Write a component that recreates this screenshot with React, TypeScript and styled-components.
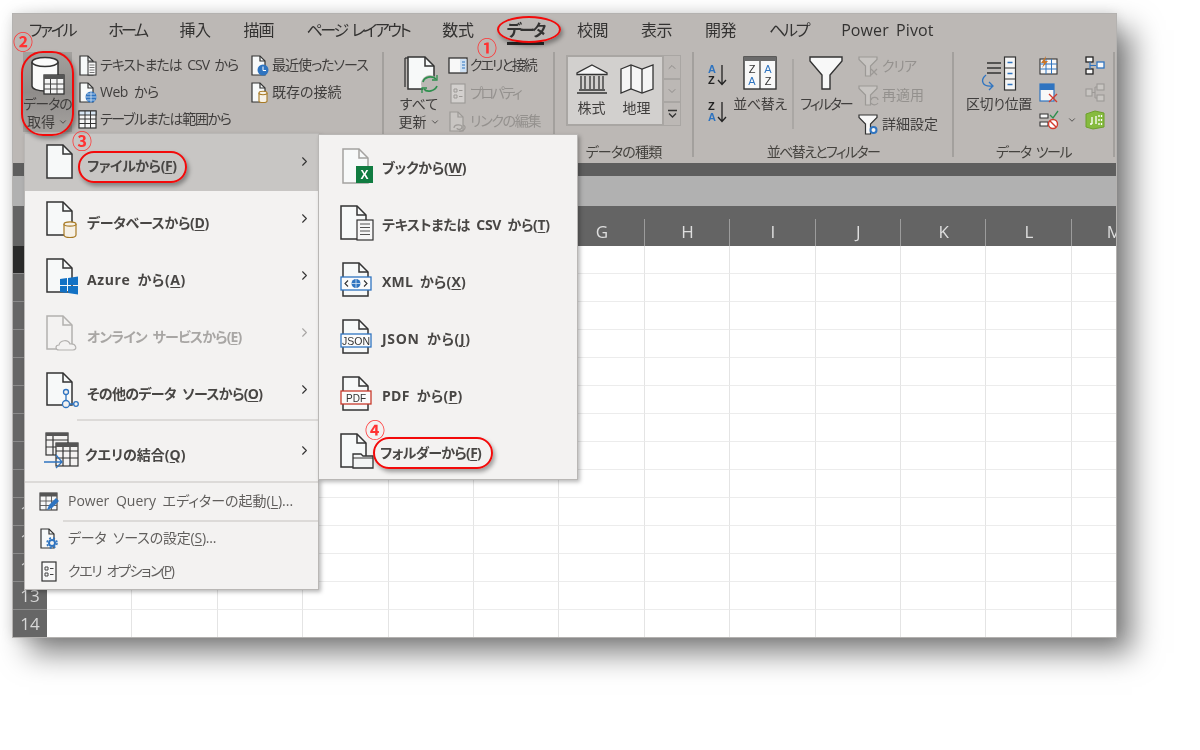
import React from "react";
import styled, { createGlobalStyle } from "styled-components";
import { ChevronDown, ChevronRight, ChevronUp } from "lucide-react";

const GlobalStyle = createGlobalStyle`
  html, body { margin: 0; padding: 0; background: #fff; }
  body {
    font-family: "Open Sans", "Noto Sans CJK JP", sans-serif;
    font-feature-settings: "palt";
  }
`;

const INK = "#333231";
const BLUE = "#2f74c0";

/* ---------- drawings ---------- */

const Glyph = styled.svg`
  display: block;
  flex: none;
  overflow: visible;
`;

type PageProps = { x?: number; y?: number; w?: number; h?: number; stroke?: string; fill?: string; fold?: number; sw?: number };

const Page = ({ x = 2, y = 1, w = 25, h = 33, stroke = "#333", fill = "#f7f9f9", fold = 9, sw = 1.5 }: PageProps) => (
  <g fill={fill} stroke={stroke} strokeWidth={sw}>
    <path d={`M${x} ${y}H${x + w - fold}L${x + w} ${y + fold}V${y + h}H${x}Z`} />
    <path d={`M${x + w - fold} ${y}V${y + fold}H${x + w}`} fill="none" />
  </g>
);

const Menu36 = ({ children }: { children: React.ReactNode }) => (
  <Glyph width="36" height="38" viewBox="0 0 36 38">{children}</Glyph>
);
const Small20 = ({ children }: { children: React.ReactNode }) => (
  <Glyph width="20" height="22" viewBox="0 0 20 22">{children}</Glyph>
);
const SmallPage = (p: PageProps) => <Page x={2} y={1} w={13} h={19} fold={5} sw={1.2} {...p} />;

const DbTableBig = () => (
  <Glyph width="36" height="40" viewBox="0 0 36 40">
    <path d="M2 6V30C2 33 8 35 15 35C22 35 28 33 28 30V6" fill="#fafafa" stroke="#333" strokeWidth="1.5" />
    <ellipse cx="15" cy="6" rx="13" ry="4.5" fill="#fafafa" stroke="#333" strokeWidth="1.5" />
    <rect x="14" y="19" width="20" height="19" fill="#f4f4f4" stroke="#333" strokeWidth="1.3" />
    <rect x="14" y="19" width="20" height="4" fill="#555" />
    <path d="M20.500 23V38M27 23V38M14 28H34M14 33H34" stroke="#444" strokeWidth="1" />
  </Glyph>
);

const TextIcon = () => (
  <Small20>
    <SmallPage />
    <rect x="10" y="7" width="8" height="13" fill="#f7f7f7" stroke="#333" strokeWidth="1" />
    <path d="M11.500 10H16.500M11.500 12.500H16.500M11.500 15H16.500M11.500 17.500H16.500" stroke="#555" strokeWidth=".8" />
  </Small20>
);
const WebIcon = () => (
  <Small20>
    <SmallPage />
    <circle cx="13" cy="15" r="5.500" fill={BLUE} />
    <path d="M7.500 15H18.500M13 9.500V20.500M9 12H17M9 18H17" stroke="#dbe8f6" strokeWidth=".8" />
  </Small20>
);
const TableIcon = () => (
  <Glyph width="20" height="20" viewBox="0 0 20 20">
    <rect x="1" y="1" width="17" height="17" fill="#f6f6f6" stroke="#333" strokeWidth="1.2" />
    <rect x="1" y="1" width="17" height="4" fill="#d8e6f4" stroke="#333" strokeWidth="1" />
    <path d="M7 1V18M12.500 1V18M1 9H18M1 13.500H18" stroke="#333" strokeWidth="1" />
  </Glyph>
);
const RecentIcon = () => (
  <Small20>
    <SmallPage />
    <circle cx="13" cy="15" r="5.500" fill={BLUE} />
    <path d="M13 11.500V15.500H16" fill="none" stroke="#fff" strokeWidth="1" />
  </Small20>
);
const ExistingIcon = () => (
  <Small20>
    <SmallPage />
    <path d="M9 11V19C9 20 11 20.500 13 20.500C15 20.500 17 20 17 19V11" fill="#f6f1e6" stroke="#a87a24" strokeWidth="1.1" />
    <ellipse cx="13" cy="11" rx="4" ry="1.700" fill="#f6f1e6" stroke="#a87a24" strokeWidth="1.1" />
  </Small20>
);
const RefreshBig = () => (
  <Glyph width="36" height="38" viewBox="-3 0 36 38">
    <path d="M1 2V31" stroke="#333" strokeWidth="1.3" />
    <path d="M1 2H5" stroke="#333" strokeWidth="1.3" />
    <Page x={4} y={1} w={26} h={32} fold={9} />
    <circle cx="26" cy="28" r="9" fill="#bcb8b5" />
    <path d="M19 26C20 21 28 19 32 23M33 30C31 35 23 37 20 33" fill="none" stroke="#2f8f4e" strokeWidth="1.700" />
    <path d="M33 19V24H28M18 37V32H23" fill="none" stroke="#2f8f4e" strokeWidth="1.300" />
  </Glyph>
);
const QueryPaneIcon = () => (
  <Glyph width="20" height="18" viewBox="0 0 20 18">
    <rect x="1" y="1" width="18" height="15" fill="#f8f8f8" stroke="#333" strokeWidth="1.3" />
    <rect x="12" y="2" width="6.500" height="13" fill="#cfe0f2" />
    <path d="M14 5H17M14 8H17M14 11H17" stroke={BLUE} strokeWidth="1.100" />
  </Glyph>
);
const PropsIcon = ({ color = "#9c9996" }: { color?: string }) => (
  <Glyph width="20" height="22" viewBox="0 0 20 22">
    <rect x="3" y="1" width="14" height="19" fill="#d3d0ce" stroke={color} strokeWidth="1.100" />
    <path d="M6 6H9V9H6ZM6 12H9V15H6ZM11 7.500H14.500M11 13.500H14.500" fill="none" stroke={color} strokeWidth="1" />
  </Glyph>
);
const LinkEditIcon = () => (
  <Small20>
    <SmallPage stroke="#9c9996" fill="#c8c5c2" />
    <path d="M6 17C6 13 14 13 14 16C14 19 9 19 9 17M11 20C17 21 19 15 15 14" fill="none" stroke="#9c9996" strokeWidth="1.200" />
  </Small20>
);
const BankIcon = () => (
  <Glyph width="34" height="30" viewBox="0 0 34 30">
    <path d="M17 1L32 9V10.500H2V9Z" fill="#f5f5f5" stroke="#333" strokeWidth="1.300" />
    <path d="M6 12V25M10 12V25M15 12V25M19 12V25M24 12V25M28 12V25" stroke="#333" strokeWidth="1.300" />
    <path d="M4 26H30M2 29H32" stroke="#333" strokeWidth="1.500" />
  </Glyph>
);
const MapIcon = () => (
  <Glyph width="34" height="30" viewBox="0 0 34 30">
    <path d="M1 5L11 1L22 5L33 1V25L22 29L11 25L1 29Z" fill="#f5f5f5" stroke="#333" strokeWidth="1.300" />
    <path d="M11 1V25M22 5V29" stroke="#333" strokeWidth="1.300" />
  </Glyph>
);
const MoreIcon = () => (
  <Glyph width="11" height="10" viewBox="0 0 11 10">
    <path d="M1 1.500H10M2 4.500L5.500 8L9 4.500" fill="none" stroke="#333" strokeWidth="1.300" />
  </Glyph>
);
const SortIcon = ({ top, bottom }: { top: string; bottom: string }) => (
  <Glyph width="22" height="24" viewBox="0 0 22 24">
    <text x="1" y="10" fontSize="11" fontWeight="700" fontFamily="Liberation Sans" fill={top === "A" ? BLUE : "#222"}>{top}</text>
    <text x="1" y="21" fontSize="11" fontWeight="700" fontFamily="Liberation Sans" fill={bottom === "A" ? BLUE : "#222"}>{bottom}</text>
    <path d="M15 2V21M11 17L15 21.500L19 17" fill="none" stroke="#222" strokeWidth="1.300" />
  </Glyph>
);
const SortBig = () => (
  <Glyph width="34" height="34" viewBox="0 0 34 34">
    <rect x="1" y="1" width="32" height="32" fill="#f8f8f8" stroke="#333" strokeWidth="1.400" />
    <rect x="1" y="1" width="32" height="4" fill="#6a6a6a" />
    <path d="M17 5V33" stroke="#333" strokeWidth="1.200" />
    <text x="9" y="17" textAnchor="middle" fontSize="11" fontFamily="Liberation Sans" fill="#333">Z</text>
    <text x="9" y="29" textAnchor="middle" fontSize="11" fontFamily="Liberation Sans" fill={BLUE}>A</text>
    <text x="25" y="17" textAnchor="middle" fontSize="11" fontFamily="Liberation Sans" fill={BLUE}>A</text>
    <text x="25" y="29" textAnchor="middle" fontSize="11" fontFamily="Liberation Sans" fill="#333">Z</text>
  </Glyph>
);
const Funnel = ({ stroke = "#333", fill = "#f8f8f8", children }: { stroke?: string; fill?: string; children?: React.ReactNode }) => (
  <Glyph width="22" height="22" viewBox="0 0 22 22">
    <path d="M1 1H19V3.500L12.500 10V20H7.500V10L1 3.500Z" fill={fill} stroke={stroke} strokeWidth="1.200" />
    {children}
  </Glyph>
);
const FunnelBig = () => (
  <Glyph width="34" height="34" viewBox="0 0 34 34">
    <path d="M1 1H33V5L21 19V33H13V19L1 5Z" fill="#f8f8f8" stroke="#333" strokeWidth="1.400" />
  </Glyph>
);
const SplitIcon = () => (
  <Glyph width="36" height="36" viewBox="0 0 36 36">
    <path d="M6 7H20M6 12H20M6 17H20" stroke="#333" strokeWidth="1.400" />
    <rect x="23.500" y="1" width="11" height="33" fill="#f5f5f5" stroke="#333" strokeWidth="1.200" />
    <path d="M23.500 12H34.500M23.500 23H34.500" stroke="#333" strokeWidth="1.200" />
    <path d="M26.500 6.500H31.500M26.500 17.500H31.500M26.500 28.500H31.500" stroke={BLUE} strokeWidth="1.300" />
    <path d="M5 19C-1 24 1 31 11 30M8 26L12 30L8 34" fill="none" stroke={BLUE} strokeWidth="1.300" />
  </Glyph>
);
const FlashFillIcon = () => (
  <Glyph width="20" height="20" viewBox="0 0 20 20">
    <rect x="1" y="3" width="17" height="15" fill="#f8f8f8" stroke="#333" strokeWidth="1.100" />
    <path d="M1 8H18M1 13H18M7 3V18M12.500 3V18" stroke={BLUE} strokeWidth="1" />
    <path d="M7 0L2 7H5L3 12L9 5H6Z" fill="#c9762a" />
  </Glyph>
);
const DuplicatesIcon = () => (
  <Glyph width="20" height="20" viewBox="0 0 20 20">
    <rect x="1" y="1" width="14" height="17" fill="#f8f8f8" stroke={BLUE} strokeWidth="1.200" />
    <rect x="1" y="1" width="14" height="6" fill={BLUE} />
    <path d="M10 11L18 19M18 11L10 19" stroke="#d23a2c" strokeWidth="1.300" />
  </Glyph>
);
const ValidateIcon = () => (
  <Glyph width="20" height="20" viewBox="0 0 20 20">
    <path d="M1 4H9V8H1ZM1 12H9V16H1Z" fill="#f8f8f8" stroke="#333" strokeWidth="1.100" />
    <path d="M11 5L14 8L19 1" fill="none" stroke="#2f8f4e" strokeWidth="1.300" />
    <circle cx="14" cy="14" r="4.500" fill="#fff" stroke="#d23a2c" strokeWidth="1.400" />
    <path d="M11 11L17 17" stroke="#d23a2c" strokeWidth="1.400" />
  </Glyph>
);
const MergeIcon = () => (
  <Glyph width="20" height="20" viewBox="0 0 20 20">
    <rect x="1" y="1" width="7" height="5" fill="#f8f8f8" stroke="#222" strokeWidth="1.300" />
    <rect x="1" y="13" width="7" height="5" fill="#f8f8f8" stroke="#222" strokeWidth="1.300" />
    <rect x="12" y="6" width="7" height="6" fill="#f8f8f8" stroke={BLUE} strokeWidth="1.300" />
    <path d="M5 6V13M5 9.500H11" stroke={BLUE} strokeWidth="1.200" />
  </Glyph>
);
const RelationsIcon = () => (
  <Glyph width="20" height="20" viewBox="0 0 20 20">
    <g fill="#c8c5c2" stroke="#9c9996" strokeWidth="1.100">
      <rect x="1" y="6" width="6" height="7" />
      <rect x="12" y="1" width="7" height="6" />
      <rect x="12" y="12" width="7" height="6" />
    </g>
    <path d="M7 9.500H10M10 4V15M10 4H12M10 15H12" fill="none" stroke="#9c9996" strokeWidth="1.100" />
  </Glyph>
);
const DataModelIcon = () => (
  <Glyph width="20" height="20" viewBox="0 0 20 20">
    <path d="M1 4L10 1L19 3V17L8 19L1 17Z" fill="#86bb3f" stroke="#6da02c" strokeWidth="1" />
    <path d="M7 7V14M5 14H7M11 6V14M14 5V7M14 9V11M14 13V15M16.500 5V7M16.500 9V11M16.500 13V15" stroke="#fff" strokeWidth="1.300" fill="none" />
  </Glyph>
);

/* menu icons */
const FileIcon = () => <Menu36><Page /></Menu36>;
const DatabaseIcon = () => (
  <Menu36>
    <Page />
    <path d="M19 23V34C19 36 22 36.500 25 36.500C28 36.500 31 36 31 34V23" fill="#f6f1e6" stroke="#a87a24" strokeWidth="1.200" />
    <ellipse cx="25" cy="23" rx="6" ry="2.200" fill="#f6f1e6" stroke="#a87a24" strokeWidth="1.200" />
  </Menu36>
);
const AzureIcon = () => (
  <Menu36>
    <Page />
    <path d="M15 21L22 20V27H15ZM23 20L33 18.500V27H23ZM15 28H22V35L15 34ZM23 28H33V36.500L23 35Z" fill="#1271c4" />
  </Menu36>
);
const OnlineIcon = () => (
  <Menu36>
    <Page stroke="#b3b1af" fill="#f3f2f1" />
    <path d="M14 35C10 35 10 30 14 30C15 25 23 24 25 29C31 28 33 35 28 35Z" fill="#f3f2f1" stroke="#b3b1af" strokeWidth="1.200" />
  </Menu36>
);
const OtherIcon = () => (
  <Menu36>
    <Page h={32} />
    <g fill="#f3f2f1" stroke={BLUE} strokeWidth="1.300">
      <path d="M21 22V28M25 32H29" />
      <circle cx="21" cy="20" r="2.500" />
      <circle cx="21" cy="32" r="3.500" />
      <circle cx="31" cy="32" r="2.300" />
    </g>
  </Menu36>
);
const CombineIcon = () => (
  <Menu36>
    <g fill="#f3f2f1" stroke="#333" strokeWidth="1.200">
      <rect x="3" y="1" width="22" height="22" />
      <path d="M3 8H25M3 15H25M10 4V23" />
    </g>
    <rect x="3" y="1" width="22" height="3" fill="#555" />
    <g fill="#f3f2f1" stroke="#333" strokeWidth="1.200">
      <rect x="13" y="11" width="22" height="23" />
      <path d="M13 19H35M13 26H35M20 15V34M27 15V34" />
    </g>
    <rect x="13" y="11" width="22" height="4" fill="#555" />
    <path d="M1 30H18M13 23L19 30L13 36" fill="none" stroke={BLUE} strokeWidth="1.300" />
  </Menu36>
);
const WorkbookIcon = () => (
  <Menu36>
    <Page x={3} y={1} h={34} stroke="#a4a2a0" />
    <rect x="16" y="18" width="17" height="17" fill="#107c41" />
    <text x="24.500" y="31" textAnchor="middle" fontSize="12" fontWeight="700" fontFamily="Liberation Sans" fill="#fff">X</text>
  </Menu36>
);
const TextFileIcon = () => (
  <Menu36>
    <Page x={1} y={1} w={25} h={33} />
    <rect x="17" y="15" width="16" height="20" fill="#f7f7f7" stroke="#333" strokeWidth="1.200" />
    <path d="M20 19H30M20 22.500H30M20 26H30M20 29.500H30" stroke="#555" strokeWidth="1" />
  </Menu36>
);
const BadgeFile = ({ label, color, size = 10 }: { label?: string; color: string; size?: number }) => (
  <Menu36>
    <Page x={3} y={1} w={25} h={33} />
    <rect x="1" y="15" width="30" height="13" fill="#fbfbfb" stroke={color} strokeWidth="1.300" />
    {label && (
      <text x="16" y="25.500" textAnchor="middle" fontSize={size} fontFamily="Liberation Sans" fill="#333">{label}</text>
    )}
    {!label && (
      <g>
        <circle cx="16" cy="21.500" r="4.500" fill={BLUE} />
        <path d="M11.500 21.500H20.500M16 17V26" stroke="#dbe8f6" strokeWidth=".8" />
        <path d="M8 18.500L5 21.500L8 24.500M24 18.500L27 21.500L24 24.500" fill="none" stroke="#333" strokeWidth="1.100" />
      </g>
    )}
  </Menu36>
);
const FolderIcon = () => (
  <Menu36>
    <Page x={1} y={1} w={25} h={33} />
    <path d="M13 21H21L23 23H33V35H13Z" fill="#f3f5f5" stroke="#333" strokeWidth="1.300" />
    <path d="M13 25H33" stroke="#333" strokeWidth="1" />
  </Menu36>
);
const PqEditorIcon = () => (
  <Glyph width="20" height="20" viewBox="0 0 20 20">
    <rect x="1" y="1" width="17" height="17" fill="#f7f7f7" stroke="#333" strokeWidth="1.100" />
    <rect x="1" y="1" width="17" height="3.500" fill="#555" />
    <path d="M1 9H18M1 13.500H18M7 4V18M12.500 4V18" stroke="#555" strokeWidth=".9" />
    <path d="M8 18L10 13L17 6L20 9L13 16Z" fill={BLUE} />
  </Glyph>
);
const DsSettingsIcon = () => (
  <Small20>
    <SmallPage x={2} h={19} w={13} />
    <circle cx="13" cy="15" r="3" fill="#f3f2f1" stroke={BLUE} strokeWidth="2" />
    <circle cx="13" cy="15" r="5" fill="none" stroke={BLUE} strokeWidth="1.500" strokeDasharray="2 2" />
  </Small20>
);
const OptionsIcon = () => (
  <Glyph width="20" height="22" viewBox="0 0 20 22">
    <rect x="3" y="1" width="14" height="19" fill="#f7f7f7" stroke="#333" strokeWidth="1.200" />
    <path d="M6 6H9V9H6ZM6 12H9V15H6ZM11 7.500H14.500M11 13.500H14.500" fill="none" stroke="#444" strokeWidth="1" />
  </Glyph>
);

/* ---------- page ---------- */

const Stage = styled.div`
  position: relative;
  width: 1200px;
  height: 750px;
  overflow: hidden;
  background: #fff;
  padding: 14px 0 0 13px;
  box-sizing: border-box;
  filter: blur(0.35px);
  word-spacing: 3px;
`;

const Window = styled.div`
  width: 1103px;
  height: 623px;
  display: flex;
  flex-direction: column;
  overflow: hidden;
  box-sizing: border-box;
  background: #fff;
  box-shadow: 0 0 0 1px #b4b2b0, 16px 16px 28px rgba(0, 0, 0, 0.5), 0 0 12px rgba(0, 0, 0, 0.14);
`;

const TabBar = styled.div`
  height: 36px;
  flex: none;
  display: flex;
  align-items: center;
  gap: 33px;
  padding: 0 0 5px 16px;
  box-sizing: border-box;
  background: #bcb8b5;
`;

const Tab = styled.div<{ $active?: boolean; $track: number }>`
  position: relative;
  font-size: 16px;
  line-height: 22px;
  white-space: nowrap;
  letter-spacing: ${(p) => p.$track}px;
  color: ${INK};
  font-weight: ${(p) => (p.$active ? 700 : 400)};
  &::after {
    content: "";
    display: ${(p) => (p.$active ? "block" : "none")};
    position: absolute;
    left: 0;
    right: 0;
    bottom: -4px;
    height: 3px;
    background: #2b2b2b;
  }
`;

const Ribbon = styled.div`
  height: 113px;
  flex: none;
  display: flex;
  padding: 2px 0 6px;
  box-sizing: border-box;
  background: #bcb8b5;
`;

const Group = styled.div<{ $width: number }>`
  width: ${(p) => p.$width}px;
  height: 105px;
  flex: none;
  box-sizing: border-box;
  border-right: 2px solid #a3a09d;
`;

const GroupBody = styled.div<{ $pad: number }>`
  height: 90px;
  display: flex;
  padding-left: ${(p) => p.$pad}px;
  box-sizing: border-box;
`;

const GroupLabel = styled.div<{ $track: number }>`
  height: 20px;
  line-height: 20px;
  text-align: center;
  font-size: 14px;
  letter-spacing: ${(p) => p.$track}px;
  color: #45433f;
`;

const BigCmd = styled.div<{ $width: number; $hot?: boolean; $ml?: number }>`
  width: ${(p) => p.$width}px;
  height: 80px;
  flex: none;
  margin-left: ${(p) => p.$ml ?? 0}px;
  padding-top: 4px;
  box-sizing: border-box;
  display: flex;
  flex-direction: column;
  align-items: center;
  background: ${(p) => (p.$hot ? "linear-gradient(#a3a09d, #8f8c8a 50%, #a5a29f)" : "none")};
`;

const BigText = styled.div<{ $track?: number }>`
  font-size: 14px;
  line-height: 18px;
  color: #403e3d;
  letter-spacing: ${(p) => p.$track ?? 0}px;
  text-align: center;
  white-space: nowrap;
  display: flex;
  align-items: center;
  justify-content: center;
  gap: 3px;
`;

const BigIconSlot = styled.div`
  height: 39px;
  flex: none;
`;

const CmdColumn = styled.div<{ $width?: number; $ml?: number; $top?: number }>`
  width: ${(p) => (p.$width ? `${p.$width}px` : "auto")};
  margin-left: ${(p) => p.$ml ?? 0}px;
  padding-top: ${(p) => p.$top ?? 0}px;
  flex: none;
  display: flex;
  flex-direction: column;
`;

const Cmd = styled.div<{ $off?: boolean; $h?: number }>`
  height: ${(p) => p.$h ?? 27}px;
  display: flex;
  align-items: center;
  gap: 2px;
  font-size: 14px;
  white-space: nowrap;
  color: ${(p) => (p.$off ? "#94918e" : "#403e3d")};
`;

const CmdText = styled.span<{ $track?: number }>`
  margin-bottom: 4px;
  letter-spacing: ${(p) => p.$track ?? 0}px;
`;

const Gallery = styled.div`
  width: 98px;
  height: 71px;
  margin: 3px 0 0 11px;
  flex: none;
  box-sizing: border-box;
  border: 2px solid #a9a6a3;
  background: #d2d0ce;
  display: flex;
  padding-left: 4px;
`;

const GalleryItem = styled.div`
  width: 42px;
  display: flex;
  flex-direction: column;
  align-items: center;
  gap: 3px;
  padding-top: 7px;
  margin-right: 6px;
  font-size: 14px;
  color: #403e3d;
`;

const ScrollStack = styled.div`
  margin-top: 3px;
  flex: none;
  display: flex;
  flex-direction: column;
`;

const ScrollCell = styled.div<{ $on?: boolean }>`
  width: 17px;
  height: 23.700px;
  box-sizing: border-box;
  display: flex;
  align-items: center;
  justify-content: center;
  border: 1px solid #a9a6a3;
  border-left: none;
  color: ${(p) => (p.$on ? "#333" : "#8f8c8a")};
`;

const Divider = styled.div<{ $ml: number }>`
  width: 2px;
  height: 70px;
  margin: 7px 0 0 ${(p) => p.$ml}px;
  flex: none;
  background: #aaa7a4;
`;

const Spacer = styled.div<{ $h: number }>`
  height: ${(p) => p.$h}px;
`;

const DarkStrip = styled.div`
  height: 13px;
  flex: none;
  background: #5e5e5e;
`;

const FormulaBar = styled.div`
  height: 30px;
  flex: none;
  background: #b1b1b1;
`;

const Sheet = styled.div`
  flex: 1;
  display: grid;
  grid-template-columns: 34px repeat(13, 85.400px);
  grid-template-rows: 40px repeat(14, 28px);
  background: #fff;
`;

const Corner = styled.div`
  background: #646464;
`;

const ColHead = styled.div`
  position: relative;
  background: #646464;
  color: #dedede;
  font-size: 17px;
  display: flex;
  align-items: flex-end;
  justify-content: center;
  padding-bottom: 3px;
  box-sizing: border-box;
  &::after {
    content: "";
    position: absolute;
    right: 0;
    top: 13px;
    bottom: 0;
    width: 1px;
    background: #9c9c9c;
  }
`;

const RowHead = styled.div<{ $on?: boolean }>`
  background: ${(p) => (p.$on ? "#2a2a2a" : "#666")};
  color: #d8d8d8;
  font-size: 17px;
  line-height: 28px;
  text-align: center;
  border-bottom: 1px solid #8a8a8a;
  box-sizing: border-box;
`;

const Cell = styled.div`
  border-right: 1px solid #e4e4e4;
  border-bottom: 1px solid #ececec;
  box-sizing: border-box;
`;

const Flyout = styled.div<{ $left: number; $top: number; $width: number; $height: number }>`
  position: absolute;
  left: ${(p) => p.$left}px;
  top: ${(p) => p.$top}px;
  width: ${(p) => p.$width}px;
  height: ${(p) => p.$height}px;
  box-sizing: border-box;
  background: #f3f2f1;
  border: 1px solid #b9b7b5;
  box-shadow: 2px 2px 4px rgba(0, 0, 0, 0.28);
`;

const MenuRow = styled.div<{ $on?: boolean; $h?: number; $pad: number }>`
  height: ${(p) => p.$h ?? 57}px;
  display: flex;
  align-items: center;
  gap: 6px;
  padding-left: ${(p) => p.$pad}px;
  box-sizing: border-box;
  background: ${(p) => (p.$on ? "#c8c6c4" : "none")};
`;

const RowIcon = styled.div<{ $top?: number }>`
  flex: none;
  padding-top: ${(p) => p.$top ?? 0}px;
`;

const RowText = styled.div<{ $off?: boolean; $top: number; $track?: number; $ml?: number }>`
  padding-top: ${(p) => p.$top}px;
  margin-left: ${(p) => p.$ml ?? 0}px;
  flex: 1;
  font-size: 14px;
  font-weight: 700;
  white-space: nowrap;
  letter-spacing: ${(p) => p.$track ?? 0}px;
  color: ${(p) => (p.$off ? "#a8a6a4" : "#484644")};
  u { text-underline-offset: 2px; }
`;

const Arrow = styled.div<{ $off?: boolean }>`
  flex: none;
  width: 21px;
  display: flex;
  color: ${(p) => (p.$off ? "#a8a6a4" : "#333")};
  margin-bottom: 2px;
`;

const MenuRule = styled.div<{ $left: number }>`
  height: 2px;
  margin-left: ${(p) => p.$left}px;
  background: #dcdad8;
`;

const LowerRow = styled.div<{ $h: number }>`
  height: ${(p) => p.$h}px;
  display: flex;
  align-items: center;
  gap: 9px;
  padding-left: 14px;
  box-sizing: border-box;
`;

const LowerText = styled.span<{ $track?: number }>`
  margin-bottom: 4px;
  font-size: 14px;
  white-space: nowrap;
  letter-spacing: ${(p) => p.$track ?? 0}px;
  color: #605e5c;
  u { text-underline-offset: 2px; }
`;

const Ring = styled.div<{ $left: number; $top: number; $width: number; $height: number; $radius: string }>`
  position: absolute;
  left: ${(p) => p.$left}px;
  top: ${(p) => p.$top}px;
  width: ${(p) => p.$width}px;
  height: ${(p) => p.$height}px;
  box-sizing: border-box;
  border: 2.700px solid #f30a0a;
  border-radius: ${(p) => p.$radius};
  box-shadow: 2px 3px 4px rgba(0, 0, 0, 0.35);
`;

const Mark = styled.div<{ $left: number; $top: number }>`
  position: absolute;
  left: ${(p) => p.$left}px;
  top: ${(p) => p.$top}px;
  font-size: 20px;
  line-height: 20px;
  font-weight: 700;
  color: #f33;
  font-feature-settings: normal;
`;

const tabs = [
  { label: "ファイル", track: -2.3 },
  { label: "ホーム", track: -2.5 },
  { label: "挿入", track: -0.5 },
  { label: "描画", track: -1 },
  { label: "ページ レイアウト", track: -2.4 },
  { label: "数式", track: -0.3 },
  { label: "データ", track: -2.6 },
  { label: "校閲", track: -0.5 },
  { label: "表示", track: -0.5 },
  { label: "開発", track: -0.5 },
  { label: "ヘルプ", track: -2.3 },
  { label: "Power Pivot", track: 0.1 },
];
const cols = "ABCDEFGHIJKLM".split("");
const rows = Array.from({ length: 14 }, (_, i) => i + 1);

const mainItems = [
  { icon: <FileIcon />, text: "ファイルから(", key: "F", on: true, track: -0.4 },
  { icon: <DatabaseIcon />, text: "データベースから(", key: "D", track: -0.3 },
  { icon: <AzureIcon />, text: "Azure から(", key: "A", track: 0.6 },
  { icon: <OnlineIcon />, text: "オンライン サービスから(", key: "E", off: true, track: -0.85 },
  { icon: <OtherIcon />, text: "その他のデータ ソースから(", key: "O", track: -0.65 },
];

const subItems = [
  { icon: <WorkbookIcon />, text: "ブックから(", key: "W", track: -0.3 },
  { icon: <TextFileIcon />, text: "テキストまたは CSV から(", key: "T", track: -0.3 },
  { icon: <BadgeFile color={BLUE} />, text: "XML から(", key: "X", track: 0.2 },
  { icon: <BadgeFile label="JSON" color={BLUE} size={10.5} />, text: "JSON から(", key: "J", track: 0.7 },
  { icon: <BadgeFile label="PDF" color="#c8392b" />, text: "PDF から(", key: "P", track: 0.3 },
  { icon: <FolderIcon />, text: "フォルダーから(", key: "F", track: -0.7, ml: -2 },
];

export default function App() {
  return (
    <Stage>
      <GlobalStyle />
      <Window>
        <TabBar>
          {tabs.map((t) => (
            <Tab key={t.label} $active={t.label === "データ"} $track={t.track}>{t.label}</Tab>
          ))}
        </TabBar>
        <Ribbon>
          <Group $width={371}>
            <GroupBody $pad={10}>
              <BigCmd $width={49} $hot>
                <BigIconSlot><DbTableBig /></BigIconSlot>
                <BigText $track={-1}>データの</BigText>
                <BigText>取得<ChevronDown size={10} strokeWidth={2} /></BigText>
              </BigCmd>
              <CmdColumn $width={172} $ml={6}>
                <Cmd><TextIcon /><CmdText $track={-1.05}>テキストまたは CSV から</CmdText></Cmd>
                <Cmd><WebIcon /><CmdText $track={-0.5}>Web から</CmdText></Cmd>
                <Cmd><TableIcon /><CmdText $track={-1.3}>テーブルまたは範囲から</CmdText></Cmd>
              </CmdColumn>
              <CmdColumn>
                <Cmd><RecentIcon /><CmdText $track={-1}>最近使ったソース</CmdText></Cmd>
                <Cmd><ExistingIcon /><CmdText>既存の接続</CmdText></Cmd>
              </CmdColumn>
            </GroupBody>
          </Group>
          <Group $width={171}>
            <GroupBody $pad={14}>
              <BigCmd $width={42}>
                <BigIconSlot><RefreshBig /></BigIconSlot>
                <BigText>すべて</BigText>
                <BigText>更新<ChevronDown size={10} strokeWidth={2} /></BigText>
              </BigCmd>
              <CmdColumn $ml={8}>
                <Cmd $h={28}><QueryPaneIcon /><CmdText $track={-2}>クエリと接続</CmdText></Cmd>
                <Cmd $off $h={28}><PropsIcon /><CmdText $track={-2.4}>プロパティ</CmdText></Cmd>
                <Cmd $off $h={28}><LinkEditIcon /><CmdText $track={-1.3}>リンクの編集</CmdText></Cmd>
              </CmdColumn>
            </GroupBody>
          </Group>
          <Group $width={139}>
            <GroupBody $pad={0}>
              <Gallery>
                <GalleryItem><BankIcon />株式</GalleryItem>
                <GalleryItem><MapIcon />地理</GalleryItem>
              </Gallery>
              <ScrollStack>
                <ScrollCell><ChevronUp size={12} /></ScrollCell>
                <ScrollCell><ChevronDown size={12} /></ScrollCell>
                <ScrollCell $on><MoreIcon /></ScrollCell>
              </ScrollStack>
            </GroupBody>
            <GroupLabel $track={-0.8}>データの種類</GroupLabel>
          </Group>
          <Group $width={260}>
            <GroupBody $pad={13}>
              <CmdColumn $top={11}>
                <SortIcon top="A" bottom="Z" />
                <Spacer $h={13} />
                <SortIcon top="Z" bottom="A" />
              </CmdColumn>
              <BigCmd $width={52} $ml={5}>
                <BigIconSlot><SortBig /></BigIconSlot>
                <BigText $track={-0.3}>並べ替え</BigText>
              </BigCmd>
              <Divider $ml={6} />
              <BigCmd $width={52} $ml={6}>
                <BigIconSlot><FunnelBig /></BigIconSlot>
                <BigText $track={-2}>フィルター</BigText>
              </BigCmd>
              <CmdColumn $ml={6}>
                <Cmd $off $h={29}>
                  <Funnel stroke="#9c9996" fill="#c8c5c2">
                    <path d="M13 13L19 19M19 13L13 19" stroke="#9c9996" strokeWidth="1.200" />
                  </Funnel>
                  <CmdText $track={-1}>クリア</CmdText>
                </Cmd>
                <Cmd $off $h={29}>
                  <Funnel stroke="#9c9996" fill="#c8c5c2">
                    <path d="M13 15C14 11 20 12 20 15M20 18C18 21 14 20 13 18" fill="none" stroke="#9c9996" strokeWidth="1.200" />
                  </Funnel>
                  <CmdText>再適用</CmdText>
                </Cmd>
                <Cmd $h={29}>
                  <Funnel>
                    <circle cx="15.500" cy="16" r="3" fill="#f3f2f1" stroke={BLUE} strokeWidth="2" />
                  </Funnel>
                  <CmdText>詳細設定</CmdText>
                </Cmd>
              </CmdColumn>
            </GroupBody>
            <GroupLabel $track={-1.6}>並べ替えとフィルター</GroupLabel>
          </Group>
          <Group $width={161}>
            <GroupBody $pad={13}>
              <BigCmd $width={64}>
                <BigIconSlot><SplitIcon /></BigIconSlot>
                <BigText $track={-0.3}>区切り位置</BigText>
              </BigCmd>
              <CmdColumn $ml={8}>
                <Cmd><FlashFillIcon /></Cmd>
                <Cmd><DuplicatesIcon /></Cmd>
                <Cmd><ValidateIcon /><ChevronDown size={10} strokeWidth={2} style={{ marginLeft: 6 }} /></Cmd>
              </CmdColumn>
              <CmdColumn $ml={8}>
                <Cmd><MergeIcon /></Cmd>
                <Cmd><RelationsIcon /></Cmd>
                <Cmd><DataModelIcon /></Cmd>
              </CmdColumn>
            </GroupBody>
            <GroupLabel $track={-1.5}>データ ツール</GroupLabel>
          </Group>
        </Ribbon>
        <DarkStrip />
        <FormulaBar />
        <Sheet>
          <Corner />
          {cols.map((c) => (
            <ColHead key={c}>{c}</ColHead>
          ))}
          {rows.map((r) => (
            <React.Fragment key={r}>
              <RowHead $on={r === 1}>{r}</RowHead>
              {cols.map((c) => (
                <Cell key={c} />
              ))}
            </React.Fragment>
          ))}
        </Sheet>
      </Window>

      <Flyout $left={24} $top={133} $width={295} $height={457}>
        {mainItems.map((m) => (
          <MenuRow key={m.text} $on={m.on} $pad={20}>
            <RowIcon>{m.icon}</RowIcon>
            <RowText $off={m.off} $top={5} $track={m.track}>{m.text}<u>{m.key}</u>)</RowText>
            <Arrow $off={m.off}><ChevronRight size={15} strokeWidth={1.700} /></Arrow>
          </MenuRow>
        ))}
        <MenuRule $left={52} />
        <MenuRow $h={60} $pad={18}>
          <RowIcon><CombineIcon /></RowIcon>
          <RowText $top={5}>クエリの結合(<u>Q</u>)</RowText>
          <Arrow><ChevronRight size={15} strokeWidth={1.700} /></Arrow>
        </MenuRow>
        <MenuRule $left={0} />
        <LowerRow $h={37}><PqEditorIcon /><LowerText>Power Query エディターの起動(<u>L</u>)...</LowerText></LowerRow>
        <MenuRule $left={38} />
        <LowerRow $h={33}><DsSettingsIcon /><LowerText $track={-0.2}>データ ソースの設定(<u>S</u>)...</LowerText></LowerRow>
        <LowerRow $h={33}><OptionsIcon /><LowerText $track={-1.4}>クエリ オプション(<u>P</u>)</LowerText></LowerRow>
      </Flyout>

      <Flyout $left={318} $top={134} $width={260} $height={346}>
        {subItems.map((m) => (
          <MenuRow key={m.text} $pad={21}>
            <RowIcon $top={7}>{m.icon}</RowIcon>
            <RowText $top={7} $track={m.track} $ml={m.ml}>{m.text}<u>{m.key}</u>)</RowText>
          </MenuRow>
        ))}
      </Flyout>

      <Ring $left={497} $top={16} $width={64} $height={27} $radius="50%" />
      <Ring $left={21} $top={51} $width={53} $height={85} $radius="22px" />
      <Ring $left={78} $top={151} $width={109} $height={32} $radius="16px" />
      <Ring $left={373} $top={437} $width={120} $height={32} $radius="16px" />
      <Mark $left={477} $top={39}>①</Mark>
      <Mark $left={13} $top={33}>②</Mark>
      <Mark $left={72} $top={132}>③</Mark>
      <Mark $left={365} $top={421}>④</Mark>
    </Stage>
  );
}
